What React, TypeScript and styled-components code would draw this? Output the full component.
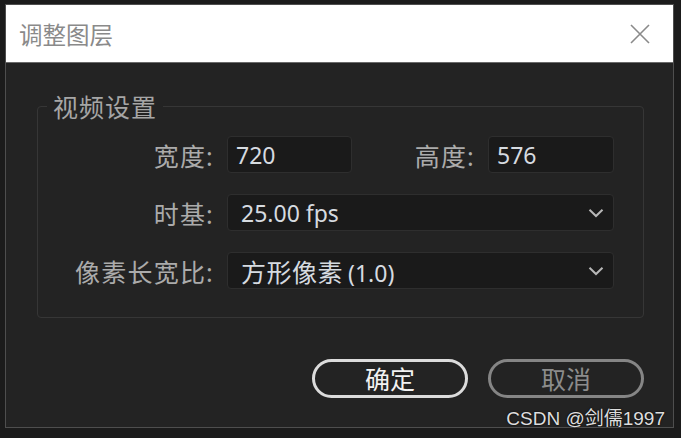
import React from "react";
import styled, { createGlobalStyle } from "styled-components";

const GlobalStyle = createGlobalStyle`
  html, body {
    margin: 0;
    padding: 0;
    background: #1b1b1b;
  }
  * {
    box-sizing: border-box;
  }
`;

const cjk = `"Noto Sans CJK SC", sans-serif`;
const latin = `"Noto Sans", "Noto Sans CJK SC", sans-serif`;

const Page = styled.div`
  position: relative;
  width: 681px;
  height: 438px;
  padding: 4px 0 0 5px;
  background: #1b1b1b;
  overflow: hidden;
`;

const Dialog = styled.div`
  width: 669px;
  height: 424px;
  border: 1px solid #4e4e4e;
  background: #232323;
  display: flex;
  flex-direction: column;
`;

const TitleBar = styled.div`
  height: 58px;
  flex-shrink: 0;
  background: #ffffff;
  border-bottom: 1px solid #6a6a6a;
  display: flex;
  align-items: center;
  justify-content: space-between;
  padding: 0 23px 0 13px;
`;

const Title = styled.span`
  font-family: ${cjk};
  font-size: 23.5px;
  color: #8a8a8a;
`;

const CloseButton = styled.button`
  width: 20px;
  height: 20px;
  padding: 0;
  border: none;
  background: transparent;
  display: flex;
  cursor: pointer;
`;

const Body = styled.div`
  flex: 1;
  padding: 30px 29px 0 31px;
  display: flex;
  flex-direction: column;
`;

const Group = styled.fieldset`
  margin: 0;
  padding: 17px 29px 28px 0;
  border: 1px solid #363636;
  border-radius: 4px;
  display: grid;
  grid-template-columns: 176px 1fr;
  column-gap: 13px;
  row-gap: 21px;
  align-items: center;
`;

const Legend = styled.legend`
  margin-left: 9px;
  padding: 0 6px;
  font-family: ${cjk};
  font-size: 25px;
  letter-spacing: 1px;
  line-height: 26px;
  color: #a6a6a6;
`;

const Label = styled.label<{ $inline?: boolean }>`
  font-family: ${latin};
  font-size: 25px;
  letter-spacing: 1.2px;
  color: #ababab;
  text-align: right;
  white-space: nowrap;
  ${({ $inline }) => ($inline ? "flex: 1; padding-right: 13px;" : "")}
`;

const Pair = styled.div`
  display: flex;
  align-items: center;
`;

const Field = styled.div<{ $width?: number }>`
  height: 37px;
  width: ${({ $width }) => ($width ? `${$width}px` : "100%")};
  background: #1a1a1a;
  border: 1px solid #2e2e2e;
  border-radius: 4px;
  display: flex;
  align-items: center;
  justify-content: space-between;
  padding: 0 9px 0 ${({ $width }) => ($width ? 8 : 13)}px;
  font-family: ${latin};
  font-size: 23px;
  color: #d6dbe0;
`;

const Cjk = styled.span`
  font-family: ${cjk};
  font-size: 25px;
  letter-spacing: 0.5px;
  margin-right: 5px;
`;

const Chevron = () => (
  <svg width="16" height="10" viewBox="0 0 16 10">
    <path d="M1.5 1.8 L8 8 L14.5 1.8" fill="none" stroke="#b8b8b8" strokeWidth="2" />
  </svg>
);

const Actions = styled.div`
  display: flex;
  justify-content: flex-end;
  gap: 20px;
  margin-top: 41px;
`;

const Button = styled.button<{ $primary?: boolean }>`
  width: 156px;
  height: 39px;
  border-radius: 20px;
  background: transparent;
  border: 3px solid ${({ $primary }) => ($primary ? "#dcdcdc" : "#858585")};
  color: ${({ $primary }) => ($primary ? "#f2f2f2" : "#8c8c8c")};
  font-family: ${cjk};
  font-size: 25px;
  line-height: 1;
  padding: 0;
  cursor: pointer;
`;

const Watermark = styled.div`
  position: absolute;
  right: 16px;
  bottom: 8px;
  font-family: "Liberation Sans", "Noto Sans CJK SC", sans-serif;
  font-size: 19px;
  color: #dedede;
  text-shadow: 0 0 2px #000;
`;

export default function App() {
  return (
    <>
      <GlobalStyle />
      <Page>
        <Dialog>
          <TitleBar>
            <Title>调整图层</Title>
            <CloseButton aria-label="关闭">
              <svg width="20" height="20" viewBox="0 0 20 20">
                <path d="M1 1 L19 19 M19 1 L1 19" stroke="#8a8a8a" strokeWidth="1.6" />
              </svg>
            </CloseButton>
          </TitleBar>
          <Body>
            <Group>
              <Legend>视频设置</Legend>
              <Label>宽度:</Label>
              <Pair>
                <Field $width={125}>720</Field>
                <Label $inline>高度:</Label>
                <Field $width={126}>576</Field>
              </Pair>
              <Label>时基:</Label>
              <Field>
                25.00 fps
                <Chevron />
              </Field>
              <Label>像素长宽比:</Label>
              <Field>
                <span>
                  <Cjk>方形像素</Cjk>(1.0)
                </span>
                <Chevron />
              </Field>
            </Group>
            <Actions>
              <Button $primary>确定</Button>
              <Button>取消</Button>
            </Actions>
          </Body>
        </Dialog>
        <Watermark>CSDN @剑儒1997</Watermark>
      </Page>
    </>
  );
}
